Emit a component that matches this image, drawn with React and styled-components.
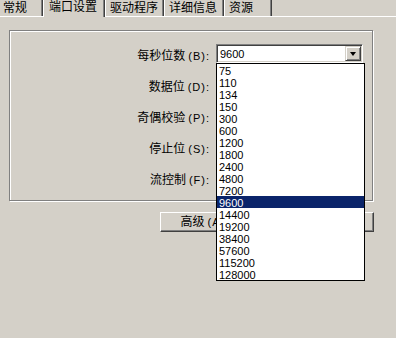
import React from "react";
import styled, { createGlobalStyle } from "styled-components";

const GlobalStyle = createGlobalStyle`
  html, body { margin: 0; padding: 0; background: #d4d0c8; }
  body {
    width: 396px; height: 338px; overflow: hidden;
    font-family: "Liberation Sans", "Noto Sans CJK SC", sans-serif;
    color: #000;
  }
`;

const Window = styled.div`
  position: relative;
  width: 396px;
  height: 338px;
  background: #d4d0c8;
  overflow: hidden;
`;

const TabStrip = styled.div`
  display: flex;
  align-items: flex-end;
  margin-top: -4px;
  height: 20px;
  border-bottom: 1px solid #fff;
`;

const Tab = styled.div`
  box-sizing: border-box;
  width: ${(p) => p.$w}px;
  margin-left: ${(p) => p.$ml || 0}px;
  height: ${(p) => (p.$active ? 21 : 17)}px;
  margin-bottom: ${(p) => (p.$active ? -1 : 0)}px;
  padding-top: ${(p) => (p.$active ? 4 : 2)}px;
  padding-left: ${(p) => (p.$active ? 5 : 4)}px;
  background: #d4d0c8;
  border-top: 1px solid #fff;
  border-left: 1px solid #fff;
  border-right: 1px solid #404040;
  box-shadow: inset -1px 0 0 #808080;
  font-size: 12px;
  line-height: 12px;
  white-space: nowrap;
  position: relative;
  z-index: ${(p) => (p.$active ? 1 : 0)};
`;

const Page = styled.div`
  padding: 13px 0 0 9px;
`;

const GroupBox = styled.div`
  box-sizing: border-box;
  width: 364px;
  height: 171px;
  border: 1px solid #808080;
  box-shadow: inset 1px 1px 0 #fff, 1px 1px 0 #fff;
  padding: 13px 9px 0 0;
  display: grid;
  grid-template-columns: 1fr 147px;
  grid-auto-rows: 19px;
  column-gap: 6px;
  row-gap: 12px;
`;

const Label = styled.div`
  font-size: 12px;
  line-height: 19px;
  text-align: right;
  white-space: nowrap;
  padding-top: 3px;
`;

const Key = styled.span`
  font-family: "Liberation Sans", sans-serif;
  font-size: 11px;
  letter-spacing: 1px;
  margin-left: 3px;
`;

const Combo = styled.div`
  box-sizing: border-box;
  height: 19px;
  display: flex;
  align-items: stretch;
  background: #fff;
  border-top: 1px solid #808080;
  border-left: 1px solid #808080;
  border-right: 1px solid #fff;
  border-bottom: 1px solid #fff;
  box-shadow: inset 1px 1px 0 #404040, inset -1px -1px 0 #d4d0c8;
  padding: 1px;
`;

const ComboText = styled.div`
  flex: 1;
  font-size: 11px;
  line-height: 16px;
  padding-left: 2px;
`;

const DropButton = styled.div`
  box-sizing: border-box;
  width: 16px;
  background: #d4d0c8;
  border-top: 1px solid #d4d0c8;
  border-left: 1px solid #d4d0c8;
  border-right: 1px solid #404040;
  border-bottom: 1px solid #404040;
  box-shadow: inset 1px 1px 0 #fff, inset -1px -1px 0 #808080;
  display: flex;
  align-items: center;
  justify-content: center;
`;

const Arrow = styled.div`
  width: 0;
  height: 0;
  border-left: 3.5px solid transparent;
  border-right: 3.5px solid transparent;
  border-top: 4px solid #000;
  margin-top: 1px;
`;

const ButtonRow = styled.div`
  display: flex;
  gap: 6px;
  margin: 11px 0 0 151px;
`;

const Button = styled.div`
  box-sizing: border-box;
  width: 104px;
  height: 20px;
  border: 1px solid;
  border-color: #fff #404040 #404040 #fff;
  box-shadow: inset -1px -1px 0 #808080;
  font-size: 12px;
  line-height: 18px;
  text-align: center;
  white-space: nowrap;
  padding-right: 6px;
`;

const DropList = styled.div`
  position: absolute;
  left: 216px;
  top: 63px;
  width: 149px;
  box-sizing: border-box;
  border: 1px solid #000;
  background: #fff;
  z-index: 5;
`;

const Item = styled.div`
  height: 12px;
  line-height: 14px;
  font-size: 11px;
  padding-left: 2px;
  background: ${(p) => (p.$selected ? "#0a246a" : "#fff")};
  color: ${(p) => (p.$selected ? "#fff" : "#000")};
`;

const tabs = [
  { t: "常规", w: 45, ml: -2 },
  { t: "端口设置", w: 62, active: true },
  { t: "驱动程序", w: 59 },
  { t: "详细信息", w: 60 },
  { t: "资源", w: 48 },
];

const rows = [
  { label: "每秒位数", key: "(B):", value: "9600" },
  { label: "数据位", key: "(D):", value: "" },
  { label: "奇偶校验", key: "(P):", value: "" },
  { label: "停止位", key: "(S):", value: "" },
  { label: "流控制", key: "(F):", value: "" },
];

const rates = [
  "75", "110", "134", "150", "300", "600", "1200", "1800", "2400",
  "4800", "7200", "9600", "14400", "19200", "38400", "57600", "115200", "128000",
];

export default function App() {
  return (
    <Window>
      <GlobalStyle />
      <TabStrip>
        {tabs.map((tb) => (
          <Tab key={tb.t} $w={tb.w} $ml={tb.ml} $active={tb.active}>
            {tb.t}
          </Tab>
        ))}
      </TabStrip>
      <Page>
        <GroupBox>
          {rows.map((r) => (
            <React.Fragment key={r.label}>
              <Label>
                {r.label}
                <Key>{r.key}</Key>
              </Label>
              <Combo>
                <ComboText>{r.value}</ComboText>
                <DropButton>
                  <Arrow />
                </DropButton>
              </Combo>
            </React.Fragment>
          ))}
        </GroupBox>
        <ButtonRow>
          <Button>
            高级<Key>(A)...</Key>
          </Button>
          <Button>
            还原默认值<Key>(R)</Key>
          </Button>
        </ButtonRow>
      </Page>
      <DropList>
        {rates.map((r) => (
          <Item key={r} $selected={r === "9600"}>
            {r}
          </Item>
        ))}
      </DropList>
    </Window>
  );
}
